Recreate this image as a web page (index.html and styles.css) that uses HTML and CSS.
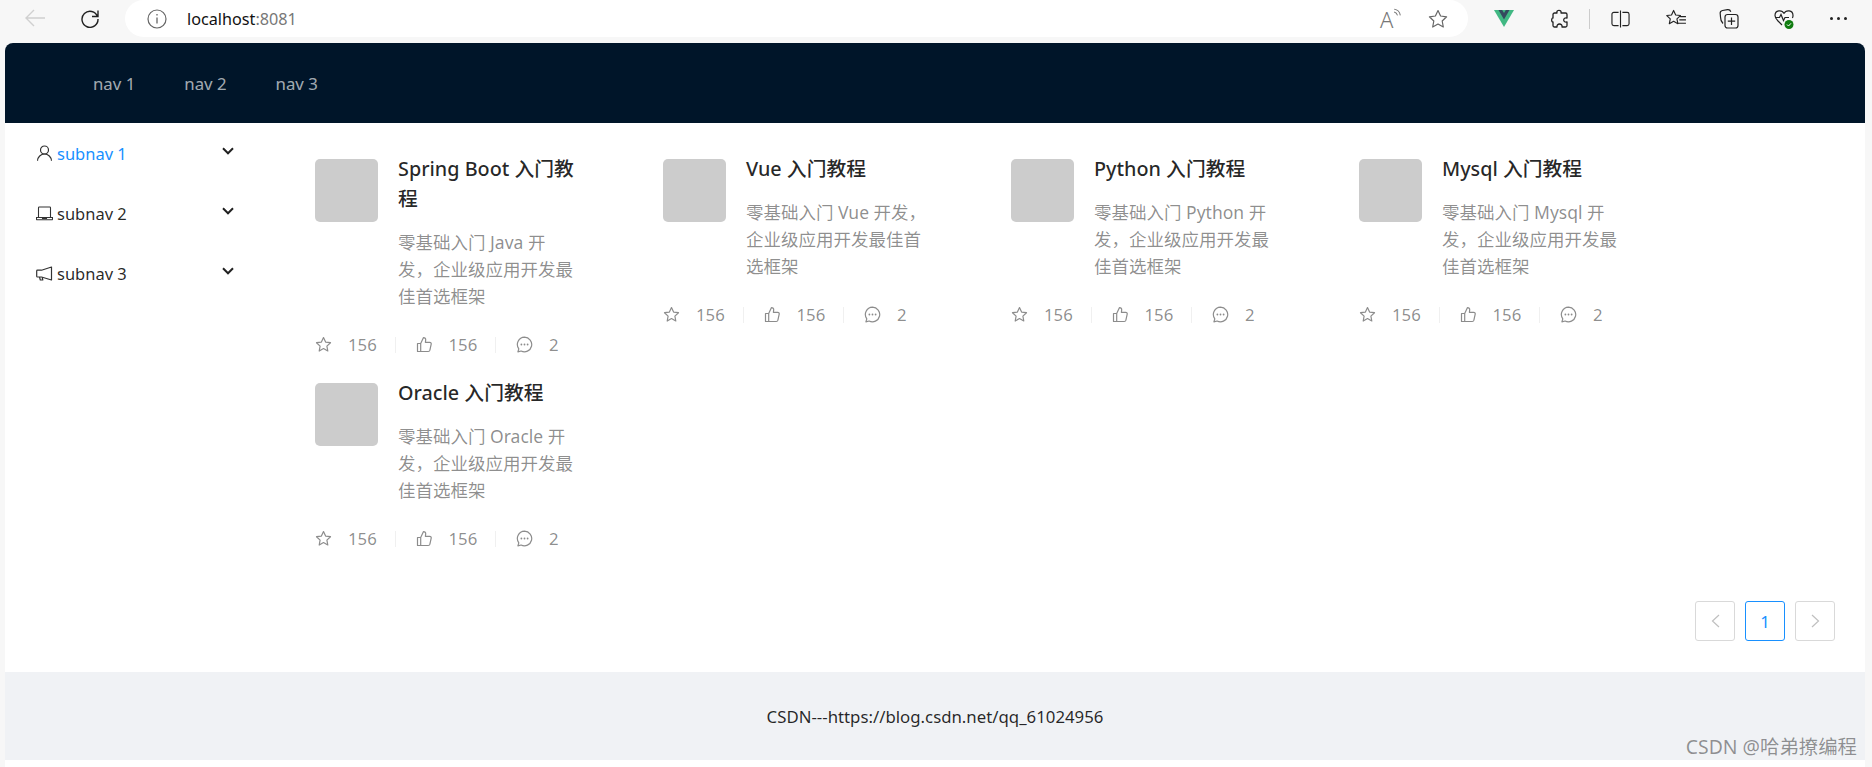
FILE: index.html
```html
<!DOCTYPE html>
<html lang="zh">
<head>
<meta charset="utf-8">
<title>localhost:8081</title>
<link rel="stylesheet" href="styles.css">
</head>
<body>
<svg class="defs" aria-hidden="true">
  <symbol id="i-star" viewBox="0 0 17 17"><path d="M8.500 1.600l2.100 4.500 4.900.6-3.600 3.400.9 4.900-4.300-2.400-4.300 2.400.9-4.900L1.500 6.700l4.900-.6z" fill="none" stroke="currentColor" stroke-width="1.200" stroke-linejoin="round"/></symbol>
  <symbol id="i-like" viewBox="0 0 17 17"><path d="M1.500 7.500h3.200v8H1.500zM4.700 7.600l2.800-6c1.500 0 2.300.9 2.200 2.200l-.3 2.600h4.300c1.100 0 1.700.9 1.500 1.800l-1.300 6c-.2.800-.8 1.300-1.600 1.300H4.700" fill="none" stroke="currentColor" stroke-width="1.200" stroke-linejoin="round"/></symbol>
  <symbol id="i-msg" viewBox="0 0 17 17"><path d="M8.500 1.200a7.300 7.300 0 1 1-3.400 13.800l-3.200.9.9-3.100A7.300 7.300 0 0 1 8.500 1.200z" fill="none" stroke="currentColor" stroke-width="1.200" stroke-linejoin="round"/><circle cx="5.400" cy="8.500" r=".9" fill="currentColor"/><circle cx="8.500" cy="8.500" r=".9" fill="currentColor"/><circle cx="11.600" cy="8.500" r=".9" fill="currentColor"/></symbol>
  <symbol id="i-down" viewBox="0 0 12 8"><path d="M1 1.300L6 6.300l5-5" fill="none" stroke="currentColor" stroke-width="2"/></symbol>
</svg>

<div class="toolbar">
  <svg class="tb-back" viewBox="0 0 20 18"><path d="M1 9h19M9 1L1 9l8 8" fill="none" stroke="#d0d0d0" stroke-width="1.400"/></svg>
  <svg class="tb-reload" viewBox="0 0 20 20"><path d="M17.500 8.500A8 8 0 1 0 18 11M18 2.500v6h-6" fill="none" stroke="#222" stroke-width="1.400"/></svg>
  <div class="address">
    <svg class="tb-info" viewBox="0 0 20 20"><circle cx="10" cy="10" r="9" fill="none" stroke="#666" stroke-width="1.200"/><path d="M10 8.500v6M10 5v1.600" stroke="#666" stroke-width="1.300"/></svg>
    <span class="url">localhost<span class="url-port">:8081</span></span>
    <span class="address-gap"></span>
    <span class="read-aloud">A<svg class="tb-waves" viewBox="0 0 8 8"><path d="M1 1c3 .5 5 2.500 5.500 5.500M1 3.500c1.500.3 2.500 1.200 3 3" fill="none" stroke="#777" stroke-width=".9"/></svg></span>
    <svg class="tb-icon tb-fav" viewBox="0 0 20 20"><path d="M10 1.500l2.600 5.500 6 .8-4.400 4.200 1.100 6L10 15l-5.300 3 1.100-6L1.400 7.800l6-.8z" fill="none" stroke="#666" stroke-width="1.200" stroke-linejoin="round"/></svg>
  </div>
  <div class="extensions">
    <svg class="tb-vue" viewBox="0 0 20 17"><path d="M0 0h20L10 17z" fill="#41b883"/><path d="M4.500 0h3.700L10 3l1.800-3h3.700L10 9.500z" fill="#35495e"/></svg>
    <svg class="tb-puzzle" viewBox="0 0 18 20"><path d="M7 1.500c2-.6 3.500.6 3 2.500h4.500a1.500 1.500 0 0 1 1.500 1.500V9c-2-.5-3.300.5-3.300 2s1.300 2.500 3.300 2v3.500a1.500 1.500 0 0 1-1.500 1.500H11c.4-2-1-3-2.500-3S5.800 16.100 6 18H3.500A1.500 1.500 0 0 1 2 16.500V13c-2 .4-1.500-4.500 0-4V5.500A1.500 1.500 0 0 1 3.500 4H6c-.3-1 0-2.100 1-2.500z" fill="none" stroke="#222" stroke-width="1.300" stroke-linejoin="round"/></svg>
    <span class="tb-divider"></span>
    <svg class="tb-split" viewBox="0 0 20 18"><path d="M8 2H3a2 2 0 0 0-2 2v10a2 2 0 0 0 2 2h5M12 2h5a2 2 0 0 1 2 2v10a2 2 0 0 1-2 2h-5M10 0v18" fill="none" stroke="#222" stroke-width="1.200"/></svg>
    <svg class="tb-favs" viewBox="0 0 22 20"><path d="M9 1.500l2.200 4.800 5 .6-3.700 3.500 1 5L9 13l-4.500 2.400 1-5L1.800 6.900l5-.6zM16 8h6M15 11.500h7M14 15h8" fill="none" stroke="#222" stroke-width="1.200" stroke-linejoin="round"/></svg>
    <svg class="tb-coll" viewBox="0 0 20 20"><path d="M4 14.500C2.500 13 1.500 11 1.500 8l-.3-3.500C1 3 2 1.800 3.500 1.500l5-.8c1.500-.2 2.800.5 3.300 2" fill="none" stroke="#222" stroke-width="1.200"/><rect x="6" y="5.500" width="13" height="13.500" rx="2.500" fill="none" stroke="#222" stroke-width="1.200"/><path d="M12.500 8.500v7.500M8.800 12.200h7.400" stroke="#222" stroke-width="1.200"/></svg>
    <svg class="tb-health" viewBox="0 0 20 20"><path d="M10 4.500C8 .5 1 1 1 6.500c0 2.500 1.500 4 3 5.500l4 4M10 4.500c2-4 9-3.500 9 2 0 1-.2 1.800-.6 2.500M1 8.500h4.500L7 5.500l2.500 6L11 8.500h4" fill="none" stroke="#222" stroke-width="1.200"/><circle cx="15" cy="15.500" r="4.500" fill="#107c10"/><path d="M13 15.500l1.500 1.500 2.500-2.700" fill="none" stroke="#fff" stroke-width="1"/></svg>
    <span class="tb-dots"><i></i><i></i><i></i></span>
  </div>
</div>

<div class="shell">
  <header class="topnav">
    <a class="topnav-item">nav 1</a>
    <a class="topnav-item">nav 2</a>
    <a class="topnav-item">nav 3</a>
  </header>

  <div class="body-row">
    <aside class="sider">
      <div class="menu-item is-active">
        <svg class="menu-icon" viewBox="0 0 17 17"><path d="M1.500 15.800c.2-3.800 3.200-6.800 7-6.800s6.800 3 7 6.800" fill="none" stroke="currentColor" stroke-width="1.200"/><circle cx="8.500" cy="5" r="4" fill="none" stroke="currentColor" stroke-width="1.200"/></svg>
        <span class="menu-label">subnav 1</span>
        <svg class="menu-arrow"><use href="#i-down"/></svg>
      </div>
      <div class="menu-item">
        <svg class="menu-icon" viewBox="0 0 17 17"><path d="M2.500 12V2.800a.8.800 0 0 1 .8-.8h10.400a.8.800 0 0 1 .8.800V12M.5 12.500h16v1.500a.8.800 0 0 1-.8.800H1.300a.8.800 0 0 1-.8-.8zM6.500 12.500v1h4v-1" fill="none" stroke="currentColor" stroke-width="1.100"/></svg>
        <span class="menu-label">subnav 2</span>
        <svg class="menu-arrow"><use href="#i-down"/></svg>
      </div>
      <div class="menu-item">
        <svg class="menu-icon" viewBox="0 0 17 17"><path d="M15.500 2v13L5.500 12H1.500a.8.800 0 0 1-.8-.8V6a.8.800 0 0 1 .8-.8h4zM3.500 12l.8 3h2.500l-.6-2.600" fill="none" stroke="currentColor" stroke-width="1.200" stroke-linejoin="round"/></svg>
        <span class="menu-label">subnav 3</span>
        <svg class="menu-arrow"><use href="#i-down"/></svg>
      </div>
    </aside>

    <main class="content">
      <div class="card-grid">
        <article class="card">
          <div class="avatar"></div>
          <div class="card-text">
            <h3 class="card-title">Spring Boot 入门教程</h3>
            <p class="card-desc">零基础入门 Java 开发，企业级应用开发最佳首选框架</p>
          </div>
          <ul class="actions">
            <li class="action"><svg class="action-icon"><use href="#i-star"/></svg>156</li>
            <li class="action"><svg class="action-icon"><use href="#i-like"/></svg>156</li>
            <li class="action"><svg class="action-icon"><use href="#i-msg"/></svg>2</li>
          </ul>
        </article>
        <article class="card">
          <div class="avatar"></div>
          <div class="card-text">
            <h3 class="card-title">Vue 入门教程</h3>
            <p class="card-desc">零基础入门 Vue 开发，企业级应用开发最佳首选框架</p>
          </div>
          <ul class="actions">
            <li class="action"><svg class="action-icon"><use href="#i-star"/></svg>156</li>
            <li class="action"><svg class="action-icon"><use href="#i-like"/></svg>156</li>
            <li class="action"><svg class="action-icon"><use href="#i-msg"/></svg>2</li>
          </ul>
        </article>
        <article class="card">
          <div class="avatar"></div>
          <div class="card-text">
            <h3 class="card-title">Python 入门教程</h3>
            <p class="card-desc">零基础入门 Python 开发，企业级应用开发最佳首选框架</p>
          </div>
          <ul class="actions">
            <li class="action"><svg class="action-icon"><use href="#i-star"/></svg>156</li>
            <li class="action"><svg class="action-icon"><use href="#i-like"/></svg>156</li>
            <li class="action"><svg class="action-icon"><use href="#i-msg"/></svg>2</li>
          </ul>
        </article>
        <article class="card">
          <div class="avatar"></div>
          <div class="card-text">
            <h3 class="card-title">Mysql 入门教程</h3>
            <p class="card-desc">零基础入门 Mysql 开发，企业级应用开发最佳首选框架</p>
          </div>
          <ul class="actions">
            <li class="action"><svg class="action-icon"><use href="#i-star"/></svg>156</li>
            <li class="action"><svg class="action-icon"><use href="#i-like"/></svg>156</li>
            <li class="action"><svg class="action-icon"><use href="#i-msg"/></svg>2</li>
          </ul>
        </article>
        <article class="card">
          <div class="avatar"></div>
          <div class="card-text">
            <h3 class="card-title">Oracle 入门教程</h3>
            <p class="card-desc">零基础入门 Oracle 开发，企业级应用开发最佳首选框架</p>
          </div>
          <ul class="actions">
            <li class="action"><svg class="action-icon"><use href="#i-star"/></svg>156</li>
            <li class="action"><svg class="action-icon"><use href="#i-like"/></svg>156</li>
            <li class="action"><svg class="action-icon"><use href="#i-msg"/></svg>2</li>
          </ul>
        </article>
      </div>

      <nav class="pager">
        <span class="page-btn"><svg class="page-arrow" viewBox="0 0 9 14"><path d="M8 1L1.500 7 8 13" fill="none" stroke="currentColor" stroke-width="1.200"/></svg></span>
        <span class="page-btn is-current">1</span>
        <span class="page-btn"><svg class="page-arrow" viewBox="0 0 9 14"><path d="M1 1l6.500 6L1 13" fill="none" stroke="currentColor" stroke-width="1.200"/></svg></span>
      </nav>
    </main>
  </div>

  <footer class="footer">CSDN---https://blog.csdn.net/qq_61024956</footer>
</div>

<div class="watermark">CSDN @哈弟撩编程</div>
</body>
</html>
```
FILE: styles.css
```css
* { box-sizing: border-box; }
html, body { margin: 0; padding: 0; height: 100%; overflow: hidden; }
body {
  background: #f7f7f7;
  font-family: "Noto Sans", "Noto Sans CJK SC", sans-serif;
  font-size: 16.8px;
  color: rgba(0, 0, 0, .85);
  position: relative;
}
.defs { width: 0; height: 0; position: absolute; }

/* browser chrome */
.toolbar { height: 43px; display: flex; align-items: flex-start; }
.tb-back { width: 20px; height: 18px; margin: 9px 0 0 25px; }
.tb-reload { width: 20px; height: 20px; margin: 8px 0 0 35px; }
.address {
  width: 1343px; height: 37px; margin-left: 25px;
  background: #fff; border-radius: 19px;
  display: flex; align-items: center; padding: 0 0 0 22px;
}
.tb-info { width: 20px; height: 20px; }
.url { margin-left: 20px; font-size: 16.2px; color: #111; }
.url-port { color: #777; }
.address-gap { flex: 1; }
.read-aloud { font-size: 22px; color: #777; width: 20px; position: relative; line-height: 1; font-weight: 300; }
.tb-waves { width: 9px; height: 9px; position: absolute; left: 13px; top: 0; }
.tb-fav { width: 20px; height: 20px; margin: 0 20px 0 28px; }
.extensions { display: flex; align-items: center; height: 37px; }
.tb-vue { width: 20px; height: 17px; margin-left: 26px; }
.tb-puzzle { width: 18px; height: 20px; margin-left: 37px; }
.tb-divider { width: 1px; height: 20px; background: #ccc; margin-left: 20px; }
.tb-split { width: 19px; height: 18px; margin-left: 21px; }
.tb-favs { width: 21px; height: 19px; margin-left: 35px; }
.tb-coll { width: 20px; height: 20px; margin-left: 33px; }
.tb-health { width: 20px; height: 20px; margin-left: 35px; }
.tb-dots { display: flex; gap: 4px; margin-left: 36px; }
.tb-dots i { width: 3px; height: 3px; border-radius: 50%; background: #222; }

/* page */
.shell {
  margin-left: 5px; width: 1860px; height: 724px;
  background: #fff; border-radius: 8px 8px 0 0; overflow: hidden;
  display: flex; flex-direction: column;
}
.topnav {
  height: 80px; background: #001529; flex: none;
  display: flex; align-items: center; gap: 49px; padding-left: 88px;
}
.topnav-item { color: rgba(255, 255, 255, .65); }

.body-row { display: flex; height: 549px; flex: none; }
.sider { width: 240px; flex: none; padding-top: 6px; }
.menu-item {
  height: 48px; margin-bottom: 12px; padding: 0 11px 0 31px;
  display: flex; align-items: center; color: rgba(0, 0, 0, .85);
}
.menu-item.is-active .menu-label { color: #1890ff; }
.menu-icon { width: 17px; height: 17px; flex: none; color: #333; }
.menu-label { margin-left: 4px; flex: 1; font-size: 16.5px; }
.menu-arrow { width: 12px; height: 8px; flex: none; margin-top: -5px; color: #222; }

.content { flex: 1; padding: 31px 30px 0 70px; display: flex; flex-direction: column; }
.card-grid { display: grid; grid-template-columns: repeat(4, 348px); row-gap: 20px; align-items: start; }
.card {
  width: 265px;
  display: grid; grid-template-columns: 63px 1fr; column-gap: 20px;
}
.avatar { width: 63px; height: 63px; margin-top: 5px; background: #ccc; border-radius: 5px; }
.card-text { min-width: 0; }
.card-title { margin: 0; font-size: 19.8px; line-height: 30px; font-weight: 500; color: rgba(0, 0, 0, .85); }
.card-desc { margin: 15px 0 0; font-size: 17.5px; line-height: 27px; color: rgba(0, 0, 0, .45); }
.actions {
  grid-column: 1 / -1; list-style: none; margin: 22px 0 0; padding: 0;
  display: flex; color: rgba(0, 0, 0, .45); line-height: 26px;
}
.action { flex: none; width: 100.5px; padding-right: 20px; display: flex; align-items: center; position: relative; }
.action + .action::before {
  content: ""; position: absolute; left: -21px; top: 5px; width: 1px; height: 16px; background: #f0f0f0;
}
.action:nth-child(n+2) .action-icon { margin-left: 0; }
.action-icon { width: 17px; height: 17px; margin-right: 16px; flex: none; margin-top: -2px; }

.pager { display: flex; justify-content: flex-end; gap: 10px; margin-top: 49px; }
.page-btn {
  width: 40px; height: 40px; border: 1px solid #d9d9d9; border-radius: 3px;
  display: flex; align-items: center; justify-content: center; color: rgba(0, 0, 0, .25);
}
.page-btn.is-current { border-color: #1890ff; color: #1890ff; }
.page-arrow { width: 9px; height: 14px; }

.footer {
  height: 88px; background: #f0f2f5; flex: none;
  display: flex; align-items: center; justify-content: center;
}
.watermark {
  position: absolute; right: 15px; top: 734px;
  font-size: 19.4px; line-height: 26px; color: rgba(0, 0, 0, .42);
}
```
